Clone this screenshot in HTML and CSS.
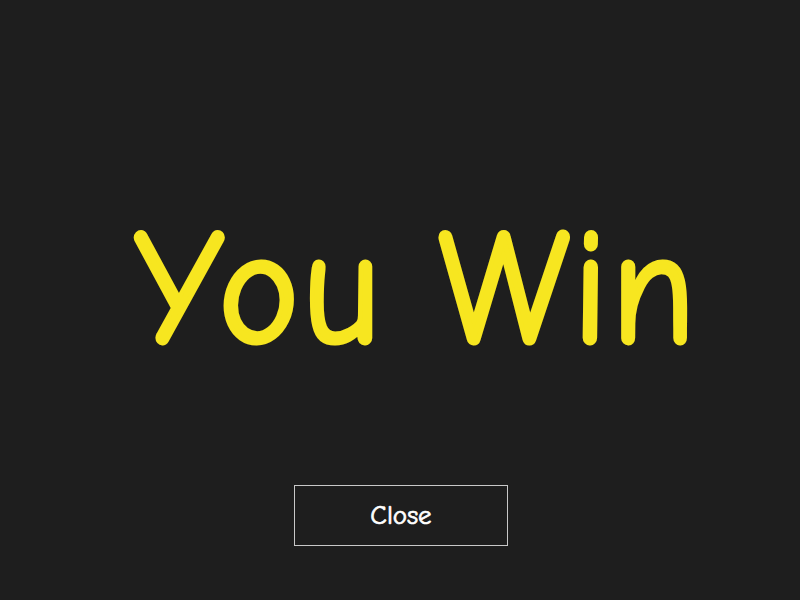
FILE: index.html
```html
<!DOCTYPE html>
<html>
<head>
<meta charset="utf-8">
<link rel="stylesheet" href="styles.css">
</head>
<body>
<main class="screen">
  <h1 class="title">You Win</h1>
  <button class="close-btn">Close</button>
</main>
</body>
</html>
```
FILE: styles.css
```css
html, body {
  margin: 0;
  padding: 0;
  background: #1e1e1e;
  height: 100%;
}
.screen {
  height: 600px;
  display: flex;
  flex-direction: column;
  align-items: center;
  font-family: "Comic Sans MS", "Comic Neue", "DejaVu Sans", sans-serif;
}
.title {
  margin: 200px 0 0 33px;
  font-size: 162px;
  font-weight: normal;
  color: #f7e620;
  -webkit-text-stroke: 5px #f7e620;
  letter-spacing: 4.5px;
  word-spacing: 0;
  line-height: 180px;
  transform: scaleX(0.93);
  text-shadow:
    1px 0 0 rgba(235, 235, 225, 0.75),
    -1px 0 0 rgba(235, 235, 225, 0.75),
    0 1px 0 rgba(235, 235, 225, 0.75),
    0 -1px 0 rgba(235, 235, 225, 0.75);
}
.close-btn {
  margin: 105px 0 0 2px;
  width: 214px;
  height: 61px;
  background: #1e1e1e;
  border: 1px solid #c8c8c8;
  color: #fff;
  font-family: inherit;
  font-size: 27px;
  -webkit-text-stroke: 0.7px #fff;
}
```
